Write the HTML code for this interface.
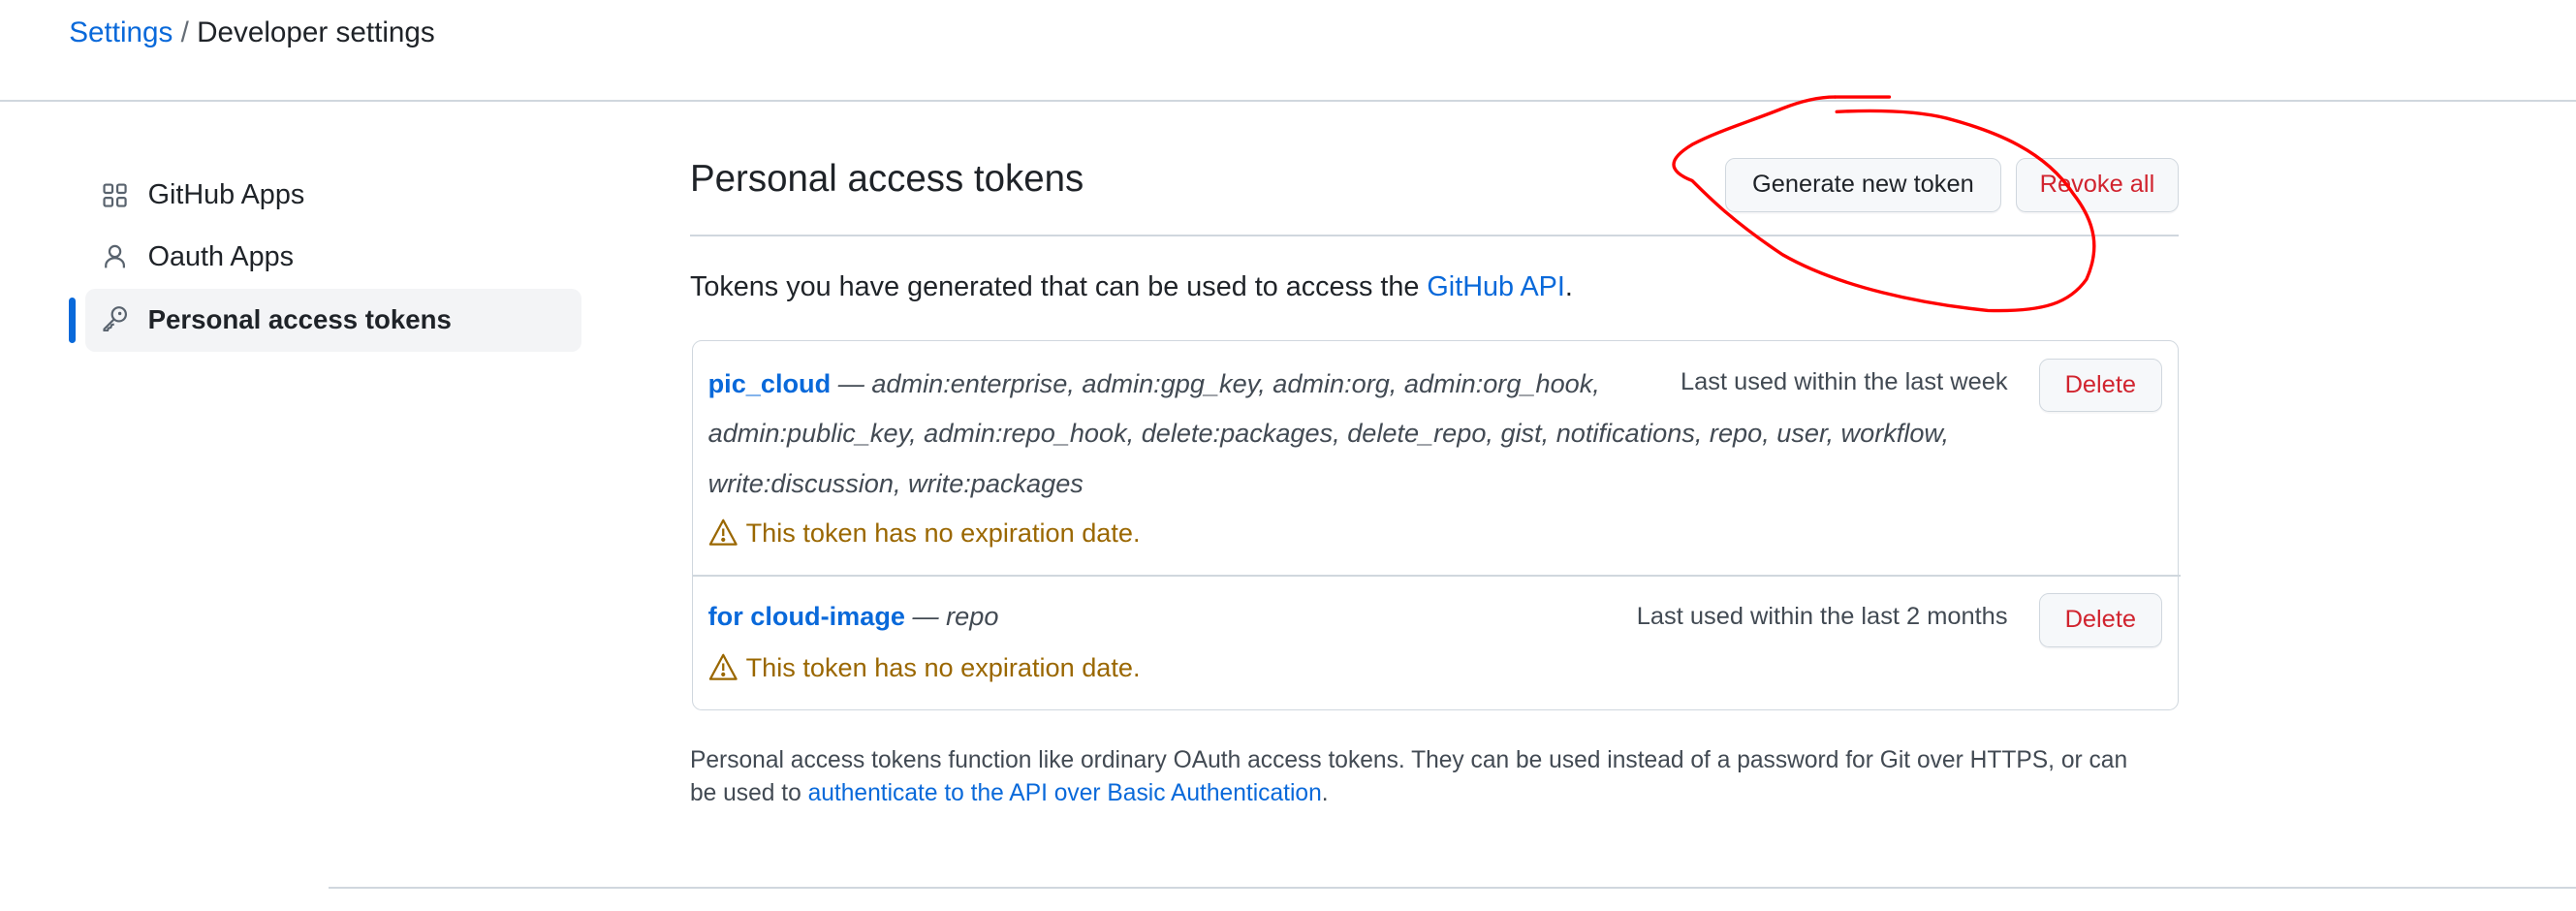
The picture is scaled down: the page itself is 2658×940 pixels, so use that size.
<!DOCTYPE html>
<html><head><meta charset="utf-8"><style>
html,body{margin:0;padding:0;background:#fff;overflow:hidden}
body{width:2658px;height:940px;position:relative}
#z{position:absolute;left:0;top:0;width:1568px;height:555px;zoom:1.6952;font-family:"Liberation Sans",sans-serif;color:#1f2328}
.a{position:absolute;white-space:nowrap}
a{color:#0969da;text-decoration:none}
.btn{position:absolute;box-sizing:border-box;border:1px solid #d0d7de;border-radius:6px;background:#f6f8fa;font-size:15px;font-weight:500;display:flex;align-items:center;justify-content:center;box-shadow:0 1px 0 rgba(31,35,40,.04)}
.it{font-style:italic;color:#424a53}
.warn{color:#9a6700;font-size:16px}
.mut{color:#424a53;font-size:15px}
</style></head><body><div id="z">
<div class="a" style="left:42px;top:10px;font-size:17.5px"><a>Settings</a> <span style="color:#656d76">/</span> Developer settings</div>
<div class="a" style="left:0;top:61px;width:1568px;height:1px;background:#d0d7de"></div>

<svg class="a" style="left:62px;top:111px" width="16" height="16" viewBox="0 0 16 16" fill="none" stroke="#59636e" stroke-width="1.3"><rect x="1.5" y="1.5" width="5" height="5" rx="1"/><rect x="9.5" y="1.5" width="5" height="5" rx="1"/><rect x="1.5" y="9.5" width="5" height="5" rx="1"/><rect x="9.5" y="9.5" width="5" height="5" rx="1"/></svg>
<div class="a" style="left:90px;top:109px;font-size:17px">GitHub Apps</div>
<svg class="a" style="left:62px;top:148px" width="16" height="16" viewBox="0 0 16 16" fill="none" stroke="#59636e" stroke-width="1.3"><circle cx="8" cy="5" r="3.3"/><path d="M2.5 15v-1.5a5.5 4.5 0 0 1 11 0V15"/></svg>
<div class="a" style="left:90px;top:147px;font-size:17px">Oauth Apps</div>
<div class="a" style="left:52px;top:176px;width:302px;height:38px;background:#f3f4f6;border-radius:6px"></div>
<div class="a" style="left:42px;top:181px;width:4px;height:28px;background:#0969da;border-radius:4px"></div>
<svg class="a" style="left:62px;top:186px" width="16" height="16" viewBox="0 0 16 16" fill="none" stroke="#59636e" stroke-width="1.3"><circle cx="10.5" cy="5.5" r="4.2"/><circle cx="11" cy="5" r="1" fill="#59636e" stroke="none"/><path d="M7.5 8.5L1.5 14.5v1h2l.5-1.5 1.5-.5.5-1.5 1.5-.5"/></svg>
<div class="a" style="left:90px;top:185px;font-size:16.3px;font-weight:bold">Personal access tokens</div>

<div class="a" style="left:420px;top:96px;font-size:22.7px">Personal access tokens</div>
<div class="btn" style="left:1050px;top:96px;width:168px;height:33px">Generate new token</div>
<div class="btn" style="left:1227px;top:96px;width:99px;height:33px;color:#d1242f">Revoke all</div>
<div class="a" style="left:420px;top:143px;width:906px;height:1px;background:#d0d7de"></div>
<div class="a" style="left:420px;top:165px;font-size:17px">Tokens you have generated that can be used to access the <a>GitHub API</a>.</div>

<div class="a" style="left:421px;top:207px;width:904px;height:224px;border:1px solid #d0d7de;border-radius:6px"></div>
<div class="a" style="left:421px;top:350px;width:906px;height:1px;background:#d0d7de"></div>
<div class="a" style="left:431px;top:218px;font-size:16px;line-height:30.5px;width:800px;white-space:normal"><a style="font-weight:bold">pic_cloud</a> <span class="it">— admin:enterprise, admin:gpg_key, admin:org, admin:org_hook,<br>admin:public_key, admin:repo_hook, delete:packages, delete_repo, gist, notifications, repo, user, workflow,<br>write:discussion, write:packages</span></div>
<div class="a mut" style="right:346px;top:224px">Last used within the last week</div>
<div class="btn" style="left:1241px;top:218px;width:75px;height:33px;color:#d1242f">Delete</div>
<svg class="a" style="left:431px;top:315px" width="18" height="18" viewBox="0 0 16 16" fill="none" stroke="#9a6700" stroke-width="1.2"><path d="M8 1.5L1 14.5h14z" stroke-linejoin="round"/><path d="M8 6v4"/><circle cx="8" cy="12" r=".5" fill="#9a6700"/></svg>
<div class="a warn" style="left:454px;top:315px">This token has no expiration date.</div>

<div class="a" style="left:431px;top:366px;font-size:16px"><a style="font-weight:bold">for cloud-image</a> <span class="it">— repo</span></div>
<div class="a mut" style="right:346px;top:367px">Last used within the last 2 months</div>
<div class="btn" style="left:1241px;top:361px;width:75px;height:33px;color:#d1242f">Delete</div>
<svg class="a" style="left:431px;top:397px" width="18" height="18" viewBox="0 0 16 16" fill="none" stroke="#9a6700" stroke-width="1.2"><path d="M8 1.5L1 14.5h14z" stroke-linejoin="round"/><path d="M8 6v4"/><circle cx="8" cy="12" r=".5" fill="#9a6700"/></svg>
<div class="a warn" style="left:454px;top:397px">This token has no expiration date.</div>

<div class="a" style="left:420px;top:453px;font-size:14.5px;line-height:20px;color:#424a53">Personal access tokens function like ordinary OAuth access tokens. They can be used instead of a password for Git over HTTPS, or can<br>be used to <a>authenticate to the API over Basic Authentication</a>.</div>
<div class="a" style="left:200px;top:540px;width:1368px;height:1px;background:#d0d7de"></div>

<svg class="a" style="left:0;top:0" width="1568" height="555" viewBox="0 0 1568 555" fill="none" stroke="#f00" stroke-width="2" stroke-linecap="round" stroke-linejoin="round">
<path d="M1117 59H1150"/>
<path d="M1118 68C1140 67 1165 67 1185 72 1215 80 1245 92 1262 118 1276 136 1278 152 1270 170 1260 184 1245 190 1210 189 1170 185 1120 175 1085 155 1055 135 1040 120 1030 110 1015 104 1015 97 1030 88 1045 80 1065 74 1085 66 1100 60 1110 59 1117 59"/>
</svg>
</div></body></html>
